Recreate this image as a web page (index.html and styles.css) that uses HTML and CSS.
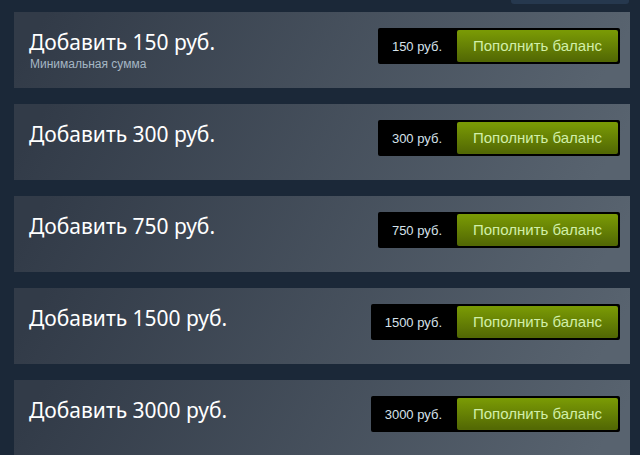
FILE: index.html
```html
<!DOCTYPE html>
<html lang="ru">
<head>
<meta charset="utf-8">
<link rel="stylesheet" href="styles.css">
</head>
<body>
<div class="page">
  <div class="topbar"><div class="tab"></div></div>

  <div class="row">
    <div class="info">
      <h1 class="title">Добавить 150 руб.</h1>
      <div class="subtitle">Минимальная сумма</div>
    </div>
    <div class="action">
      <span class="price">150 руб.</span>
      <a class="btn">Пополнить баланс</a>
    </div>
  </div>

  <div class="row">
    <div class="info">
      <h1 class="title">Добавить 300 руб.</h1>
    </div>
    <div class="action">
      <span class="price">300 руб.</span>
      <a class="btn">Пополнить баланс</a>
    </div>
  </div>

  <div class="row">
    <div class="info">
      <h1 class="title">Добавить 750 руб.</h1>
    </div>
    <div class="action">
      <span class="price">750 руб.</span>
      <a class="btn">Пополнить баланс</a>
    </div>
  </div>

  <div class="row">
    <div class="info">
      <h1 class="title">Добавить 1500 руб.</h1>
    </div>
    <div class="action">
      <span class="price">1500 руб.</span>
      <a class="btn">Пополнить баланс</a>
    </div>
  </div>

  <div class="row">
    <div class="info">
      <h1 class="title">Добавить 3000 руб.</h1>
    </div>
    <div class="action">
      <span class="price">3000 руб.</span>
      <a class="btn">Пополнить баланс</a>
    </div>
  </div>
</div>
</body>
</html>
```

FILE: styles.css
```css
html, body {
  margin: 0;
  padding: 0;
  background: #1b2838;
}

.page {
  padding: 0 10px 0 14px;
  height: 455px;
  overflow: hidden;
}

.topbar {
  display: flex;
  justify-content: flex-end;
  height: 4px;
  margin-bottom: 8px;
}

.tab {
  width: 118px;
  height: 4px;
  margin-right: 1px;
  background: #26384e;
  border-radius: 0 0 3px 3px;
}

.row {
  display: flex;
  justify-content: space-between;
  align-items: flex-start;
  height: 76px;
  margin-bottom: 16px;
  background: linear-gradient(-60deg, #58636f 5%, #323b48 95%);
}

.info {
  padding: 16px 0 0 15px;
}

.title {
  margin: 0;
  font-family: "Noto Sans", sans-serif;
  font-weight: normal;
  font-size: 21px;
  line-height: 28px;
  color: #ffffff;
}

.subtitle {
  font-family: "Liberation Sans", Arial, sans-serif;
  font-size: 12px;
  line-height: 16px;
  color: #a5b6c4;
  padding-left: 1px;
}

.action {
  display: flex;
  align-items: center;
  margin: 16px 10px 0 0;
  padding: 2px 2px 2px 0;
  background: #000000;
  border-radius: 2px;
}

.price {
  padding: 0 13px 0 14px;
  font-family: "Liberation Sans", Arial, sans-serif;
  font-size: 13px;
  color: #d6e2ea;
}

.btn {
  display: block;
  margin-left: 2px;
  height: 32px;
  line-height: 32px;
  padding: 0 16px;
  border-radius: 2px;
  background: linear-gradient(to bottom, #799905 5%, #536904 95%);
  color: #d2efa9;
  font-family: "Liberation Sans", Arial, sans-serif;
  font-size: 15px;
  white-space: nowrap;
}
```
